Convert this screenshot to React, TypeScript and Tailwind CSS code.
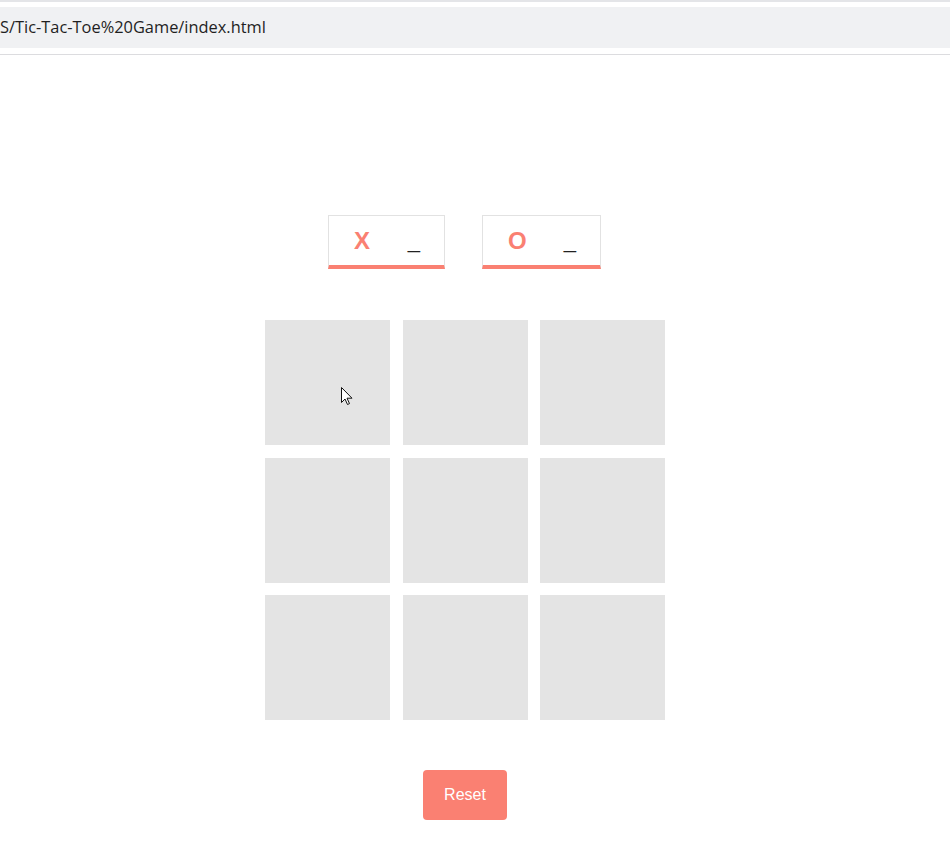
const font = { fontFamily: '"Liberation Sans", Arial, sans-serif' };

function ScoreBox({ mark, w }: { mark: string; w: string }) {
  return (
    <div
      className={`flex h-[54px] items-center justify-between border border-[#e2e2e2] border-b-4 border-b-[#fa8072] pl-[25px] pr-[24px] ${w}`}
    >
      <span className="text-[24px] font-bold leading-none text-[#fa8072]">{mark}</span>
      <span className="text-[22px] leading-none text-[#222]">_</span>
    </div>
  );
}

function Cursor() {
  return (
    <svg
      className="pointer-events-none absolute left-[76px] top-[67px]"
      width="13"
      height="20"
      viewBox="0 0 13 20"
    >
      <path
        d="M0.5 0.5 L0.5 15.5 L4 12 L6.5 17.5 L8.5 16.6 L6 11.2 L11 11.2 Z"
        fill="#fff"
        stroke="#111"
        strokeWidth="1"
        strokeLinejoin="round"
      />
    </svg>
  );
}

export default function App() {
  const cells = Array.from({ length: 9 }, (_, i) => i);

  return (
    <div className="min-h-[844px] w-[950px] bg-white" style={font}>
      {/* browser chrome */}
      <div className="h-[55px] border-b border-[#dcdcdf]">
        <div className="h-[2px] bg-[#e4e5e8]" />
        <div className="mt-[5px] flex h-[41px] items-center bg-[#f0f1f3] pr-[1px]">
          <span
            className="whitespace-nowrap text-[16.4px] text-[#1f1f1f]"
            style={{ fontFamily: '"Open Sans", "Noto Sans", sans-serif' }}
          >
            S/Tic-Tac-Toe%20Game/index.html
          </span>
        </div>
      </div>

      <div className="flex w-[930px] flex-col items-center pt-[160px]">
        <div className="flex gap-[37px] pr-[1px]">
          <ScoreBox mark="X" w="w-[117px]" />
          <ScoreBox mark="O" w="w-[119px]" />
        </div>

        <div className="mt-[51px] grid grid-cols-[125px_125px_125px] grid-rows-[125px_125px_125px] gap-x-[12.5px] gap-y-[12.5px]">
          {cells.map((i) => (
            <div key={i} className="relative bg-[#e4e4e4]">
              {i === 0 && <Cursor />}
            </div>
          ))}
        </div>

        <button className="mt-[50px] h-[50px] w-[84px] rounded-[4px] bg-[#fa8072] text-[16px] text-white">
          Reset
        </button>
      </div>
    </div>
  );
}
